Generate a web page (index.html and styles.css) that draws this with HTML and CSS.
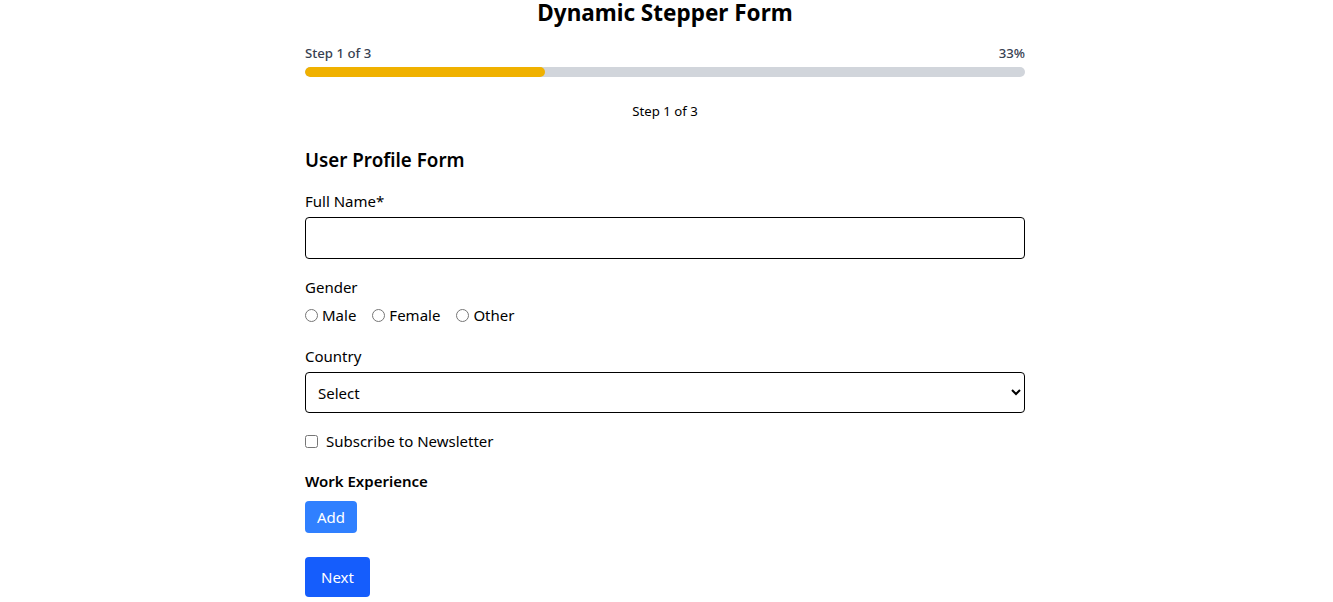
FILE: index.html
```html
<!DOCTYPE html>
<html lang="en">
<head>
<meta charset="utf-8">
<title>Dynamic Stepper Form</title>
<link rel="stylesheet" href="styles.css">
</head>
<body>
<div class="page">
  <h1 class="title">Dynamic Stepper Form</h1>
  <div class="progress-head">
    <span>Step 1 of 3</span>
    <span>33%</span>
  </div>
  <div class="track"><div class="fill" style="width:33.33%"></div></div>
  <p class="step-text">Step 1 of 3</p>
  <h2 class="form-title">User Profile Form</h2>
  <form class="form">
    <label class="label label-first" for="name">Full Name*</label>
    <input class="input" id="name" type="text">
    <div class="label">Gender</div>
    <div class="radios">
      <label class="radio"><input type="radio" name="g"> Male</label>
      <label class="radio"><input type="radio" name="g"> Female</label>
      <label class="radio"><input type="radio" name="g"> Other</label>
    </div>
    <label class="label label-country" for="country">Country</label>
    <select class="select" id="country"><option>Select</option></select>
    <label class="check"><input type="checkbox"> Subscribe to Newsletter</label>
    <div class="section">Work Experience</div>
    <button type="button" class="btn-add">Add</button>
    <button type="button" class="btn-next">Next</button>
  </form>
</div>
</body>
</html>
```
FILE: styles.css
```css
* { box-sizing: border-box; }
body {
  margin: 0;
  padding-right: 3px;
  font-family: "Noto Sans", "Open Sans", sans-serif;
  color: #000;
  background: #fff;
}
.page {
  width: 720px;
  margin: 0 auto;
}
.title {
  margin: 0;
  font-size: 22.5px;
  line-height: 25px;
  font-weight: 700;
  text-align: center;
}
.progress-head {
  margin-top: 18px;
  display: flex;
  justify-content: space-between;
  font-size: 13.2px;
  line-height: 20px;
  color: #374151;
  font-weight: 500;
}
.track {
  margin-top: 4px;
  height: 10px;
  border-radius: 9999px;
  background: #d1d5db;
  overflow: hidden;
}
.fill {
  height: 100%;
  background: #f0b100;
  border-radius: 9999px;
}
.step-text {
  margin: 24px 0 0;
  text-align: center;
  font-size: 13.2px;
  line-height: 20px;
}
.form-title {
  margin: 25px 0 0;
  font-size: 18.8px;
  line-height: 28px;
  font-weight: 600;
}
.form {
  display: flex;
  flex-direction: column;
  align-items: flex-start;
}
.label {
  display: block;
  font-size: 15px;
  line-height: 24px;
  margin-top: 16px;
}
.label-first { margin-top: 15px; }
.label-country { margin-top: 17px; }
.input {
  margin-top: 4px;
  width: 100%;
  height: 42px;
  border: 1px solid #000;
  border-radius: 4px;
  padding: 0 12px;
  font: inherit;
}
.radios {
  margin-top: 4px;
  display: flex;
  gap: 16px;
  font-size: 15px;
  line-height: 24px;
}
.radio {
  display: flex;
  align-items: center;
  gap: 4px;
}
.radio input {
  margin: 0;
  width: 13px;
  height: 13px;
}
.select {
  margin-top: 4px;
  width: 100%;
  height: 41px;
  border: 1px solid #000;
  border-radius: 4px;
  padding: 0 8px;
  font: inherit;
  font-size: 15px;
  background: #fff;
  color: #000;
}
.check {
  margin-top: 16px;
  display: flex;
  align-items: center;
  gap: 8px;
  font-size: 15px;
  line-height: 24px;
}
.check input {
  margin: 0;
  width: 13px;
  height: 13px;
}
.section {
  margin-top: 16px;
  font-size: 15px;
  line-height: 24px;
  font-weight: 600;
}
.btn-add {
  margin-top: 8px;
  height: 32px;
  padding: 0 12px;
  border: 0;
  border-radius: 4px;
  background: #3080ff;
  color: #fff;
  font: inherit;
  font-size: 15px;
}
.btn-next {
  margin-top: 24px;
  height: 40px;
  padding: 0 16px;
  border: 0;
  border-radius: 4px;
  background: #155dfc;
  color: #fff;
  font: inherit;
  font-size: 15px;
}
```
